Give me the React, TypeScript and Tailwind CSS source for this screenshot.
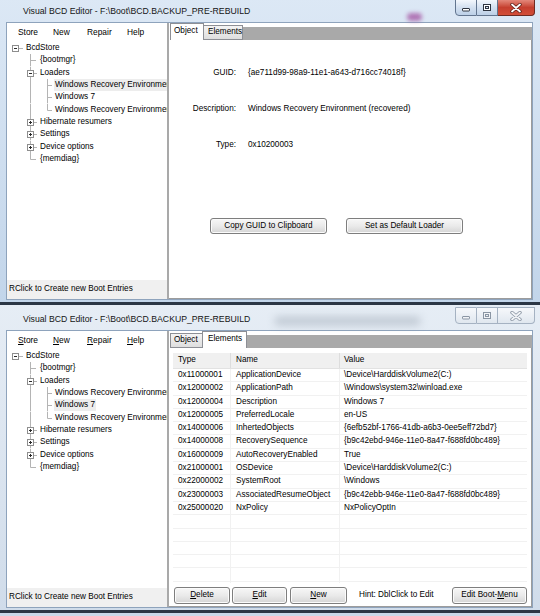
import React from "react";

type TreeItem = { text: string; level: 0 | 1 | 2; box?: "minus" | "plus" };

const TREE: TreeItem[] = [
  { text: "BcdStore", level: 0, box: "minus" },
  { text: "{bootmgr}", level: 1 },
  { text: "Loaders", level: 1, box: "minus" },
  { text: "Windows Recovery Environment", level: 2 },
  { text: "Windows 7", level: 2 },
  { text: "Windows Recovery Environment", level: 2 },
  { text: "Hibernate resumers", level: 1, box: "plus" },
  { text: "Settings", level: 1, box: "plus" },
  { text: "Device options", level: 1, box: "plus" },
  { text: "{memdiag}", level: 1 },
];

const ELEMENTS: [string, string, string][] = [
  ["0x11000001", "ApplicationDevice", "\\Device\\HarddiskVolume2(C:)"],
  ["0x12000002", "ApplicationPath", "\\Windows\\system32\\winload.exe"],
  ["0x12000004", "Description", "Windows 7"],
  ["0x12000005", "PreferredLocale", "en-US"],
  ["0x14000006", "InhertedObjects", "{6efb52bf-1766-41db-a6b3-0ee5eff72bd7}"],
  ["0x14000008", "RecoverySequence", "{b9c42ebd-946e-11e0-8a47-f688fd0bc489}"],
  ["0x16000009", "AutoRecoveryEnabled", "True"],
  ["0x21000001", "OSDevice", "\\Device\\HarddiskVolume2(C:)"],
  ["0x22000002", "SystemRoot", "\\Windows"],
  ["0x23000003", "AssociatedResumeObject", "{b9c42ebb-946e-11e0-8a47-f688fd0bc489}"],
  ["0x25000020", "NxPolicy", "NxPolicyOptIn"],
];

const TEXT_X = [18, 32, 47];
const X0 = 8.5;
const X1 = 23.5;
const X2 = 40.5;
const ROW_H = 12.33;

function Box({ cx, plus }: { cx: number; plus?: boolean }) {
  const m = 6.5;
  return (
    <g>
      <rect x={cx - 3} y={m - 3} width={6} height={6} fill="white" stroke="#8e8e8e" />
      <line x1={cx - 1.5} x2={cx + 1.5} y1={m} y2={m} stroke="#2a2a2a" />
      {plus && <line x1={cx} x2={cx} y1={m - 1.5} y2={m + 1.5} stroke="#2a2a2a" />}
    </g>
  );
}

function TreeRow({ item, index, selected }: { item: TreeItem; index: number; selected: boolean }) {
  const m = 6.5;
  const w = TEXT_X[item.level];
  return (
    <div className="flex h-[12.33px] items-center">
      <svg width={w} height={ROW_H} className="shrink-0" stroke="#b4b4b4" strokeWidth={1}>
        {index >= 1 && <line x1={X1} x2={X1} y1={0} y2={index === 9 ? m : ROW_H} />}
        {index >= 3 && index <= 5 && <line x1={X2} x2={X2} y1={0} y2={index === 5 ? m : ROW_H} />}
        {item.level === 0 && <line x1={11.5} x2={16} y1={m} y2={m} />}
        {item.level === 1 && !item.box && <line x1={X1} x2={29} y1={m} y2={m} />}
        {item.level === 1 && item.box && <line x1={X1 + 3} x2={30} y1={m} y2={m} />}
        {item.level === 2 && <line x1={X2} x2={45} y1={m} y2={m} />}
        {item.level === 0 && <Box cx={X0} />}
        {item.level === 1 && item.box && <Box cx={X1} plus={item.box === "plus"} />}
      </svg>
      <span className={`whitespace-nowrap leading-[12px] px-[1px] ${selected ? "bg-[#ededed]" : ""}`}>
        {item.text}
      </span>
    </div>
  );
}

function Btn({ className, children }: { className: string; children: React.ReactNode }) {
  return (
    <div
      className={`flex items-center justify-center rounded-[3px] border border-[#7e7e7e] bg-[#e6e6e6] bg-linear-to-b from-[#f7f7f7] via-[#eaeaea] to-[#d5d5d5] shadow-[inset_0_0_0_1px_#fbfbfb] whitespace-nowrap ${className}`}
    >
      {children}
    </div>
  );
}

function Controls({ active }: { active: boolean }) {
  const side = active
    ? "bg-[#d3e0f0] bg-linear-to-b from-[#f3f7fc] via-[#d3e0f0] to-[#bcd0e7] border-[#62758f]"
    : "bg-[#e9eef4] bg-linear-to-b from-[#f6f8fb] to-[#e0e7ef] border-[#a5b2c2]";
  const close = active
    ? "bg-[#c8463a] bg-linear-to-b from-[#e3877a] via-[#c53f2f] to-[#d24e38] border-[#6e2b22]"
    : "bg-[#e9eef4] bg-linear-to-b from-[#f6f8fb] to-[#e0e7ef] border-[#a5b2c2]";
  const ink = active ? "#2d3440" : "#8a95a3";
  const fill = active ? "#ffffff" : "#f2f4f7";
  return (
    <div className="absolute right-[5px] top-[2px] flex h-[17px]">
      <div className={`w-[22px] flex items-center justify-center rounded-bl-[4px] border ${side}`}>
        <svg width="10" height="8">
          <rect x="1.5" y="4.5" width="7" height="2.5" rx="0.5" fill={fill} stroke={ink} />
        </svg>
      </div>
      <div className={`w-[21px] flex items-center justify-center border-y border-r ${side}`}>
        <svg width="10" height="9">
          <rect x="1.5" y="1.5" width="7" height="6" fill="none" stroke={ink} />
          <rect x="2.5" y="2.5" width="5" height="4" fill="none" stroke={fill} />
          <rect x="3.5" y="3.5" width="3" height="2" fill="none" stroke={ink} />
        </svg>
      </div>
      <div className={`w-[37px] flex items-center justify-center rounded-br-[4px] border-y border-r ${close}`}>
        <svg width="12" height="10">
          <path d="M2 1.5 L10 8.5 M10 1.5 L2 8.5" stroke={active ? "#5a1f18" : ink} strokeWidth="3.4" strokeLinecap="round" />
          <path d="M2 1.5 L10 8.5 M10 1.5 L2 8.5" stroke={fill} strokeWidth="1.8" strokeLinecap="round" />
        </svg>
      </div>
    </div>
  );
}

function LeftPanel({ selected, underline }: { selected: number; underline: boolean }) {
  const u = (s: string) =>
    underline ? (
      <>
        <u className="underline-offset-1">{s[0]}</u>
        {s.slice(1)}
      </>
    ) : (
      s
    );
  return (
    <div className="w-[160px] flex flex-col bg-white overflow-hidden">
      <div className="h-[19px] shrink-0 flex items-center text-[8.4px]">
        <span className="ml-[11px] w-[35px]">{u("Store")}</span>
        <span className="w-[34px]">{u("New")}</span>
        <span className="w-[40px]">{u("Repair")}</span>
        <span>{u("Help")}</span>
      </div>
      <div className="flex-1 min-h-0 overflow-hidden">
        {TREE.map((item, i) => (
          <TreeRow key={i} item={item} index={i} selected={i === selected} />
        ))}
      </div>
      <div className="h-[19px] shrink-0 flex items-center pl-[2px] bg-[#f0f0f0] whitespace-nowrap">
        RClick to Create new Boot Entries
      </div>
    </div>
  );
}

function ObjectBody() {
  const rows = [
    ["GUID:", "{ae711d99-98a9-11e1-a643-d716cc74018f}"],
    ["Description:", "Windows Recovery Environment (recovered)"],
    ["Type:", "0x10200003"],
  ];
  return (
    <div className="flex flex-col">
      <div className="pt-[27px] flex flex-col gap-[24.3px]">
        {rows.map(([l, v]) => (
          <div key={l} className="flex h-[12px] items-center whitespace-nowrap">
            <span className="w-[67px] text-right">{l}</span>
            <span className="ml-[12px]">{v}</span>
          </div>
        ))}
      </div>
      <div className="flex mt-[66.7px] ml-[41px] gap-[19px]">
        <Btn className="w-[117px] h-[16px]">Copy GUID to Clipboard</Btn>
        <Btn className="w-[117px] h-[16px]">Set as Default Loader</Btn>
      </div>
    </div>
  );
}

function ElementsBody() {
  const empty = Array.from({ length: 7 });
  return (
    <div className="flex-1 min-h-0 flex flex-col">
      <div className="flex-1 min-h-0 mx-[4px] mt-[5px] overflow-hidden bg-white">
        <div className="flex h-[16px] bg-[#f0f0f0] border-b border-[#e2e2e2]">
          <div className="w-[58px] pl-[5px] flex items-center border-r border-[#dddddd]">Type</div>
          <div className="w-[109px] pl-[5px] flex items-center border-r border-[#dddddd]">Name</div>
          <div className="flex-1 pl-[4px] flex items-center">Value</div>
        </div>
        {ELEMENTS.map(([t, n, v]) => (
          <div key={t} className="flex h-[13.3px] border-b border-[#f1f1f1] whitespace-nowrap">
            <div className="w-[58px] pl-[5px] flex items-center border-r border-[#f1f1f1]">{t}</div>
            <div className="w-[109px] pl-[5px] flex items-center border-r border-[#f1f1f1]">{n}</div>
            <div className="flex-1 pl-[4px] flex items-center">{v}</div>
          </div>
        ))}
        {empty.map((_, i) => (
          <div key={i} className="flex h-[13.3px] border-b border-[#f1f1f1]">
            <div className="w-[58px] border-r border-[#f1f1f1]" />
            <div className="w-[109px] border-r border-[#f1f1f1]" />
            <div className="flex-1" />
          </div>
        ))}
      </div>
      <div className="flex items-center h-[17px] shrink-0 mt-[4px] mb-[2px] ml-[5px] mr-[4px]">
        <Btn className="w-[56px] h-[17px]">
          <u className="underline-offset-1">D</u>elete
        </Btn>
        <Btn className="w-[55px] h-[17px] ml-[2px]">
          <u className="underline-offset-1">E</u>dit
        </Btn>
        <Btn className="w-[57px] h-[17px] ml-[3px]">
          <u className="underline-offset-1">N</u>ew
        </Btn>
        <span className="ml-[12px] whitespace-nowrap">Hint: DblClick to Edit</span>
        <Btn className="w-[75px] h-[17px] ml-auto">
          Edit Boot-<u className="underline-offset-1">M</u>enu
        </Btn>
      </div>
    </div>
  );
}

function RightPanel({ tab }: { tab: "object" | "elements" }) {
  const sel = "h-[17px] border border-b-0 border-[#8d8f95] bg-white flex items-center";
  const unsel =
    "h-[15px] border border-[#8d8f95] bg-[#e8e8e8] bg-linear-to-b from-[#f4f4f4] to-[#dedede] flex items-center";
  return (
    <div className="flex-1 min-h-0 flex flex-col">
      <div className="h-[17px] shrink-0 flex items-end bg-white">
        {tab === "object" ? (
          <>
            <div className={`ml-[1px] w-[34px] pl-[3px] pb-[1px] ${sel}`}>Object</div>
            <div className={`w-[39px] pl-[4px] border-l-0 ${unsel}`}>Elements</div>
          </>
        ) : (
          <>
            <div className={`ml-[1px] w-[32px] pl-[3px] border-r-0 ${unsel}`}>Object</div>
            <div className={`w-[45px] pl-[5px] pb-[1px] ${sel}`}>Elements</div>
          </>
        )}
        <div className="flex-1 h-[13px] bg-[#a9a9a9]" />
      </div>
      <div className="flex-1 min-h-0 flex flex-col bg-white border-r border-b border-[#9c9c9c]">
        {tab === "object" ? <ObjectBody /> : <ElementsBody />}
      </div>
    </div>
  );
}

function Window({ active, tab, selected }: { active: boolean; tab: "object" | "elements"; selected: number }) {
  return (
    <div
      className={`relative h-[308px] flex flex-col ${
        active
          ? "bg-[#cfdff0] bg-linear-to-b from-[#dce8f5] to-[#c2d5ea]"
          : "bg-[#dbe4ef] bg-linear-to-b from-[#e6edf5] to-[#d0dcea]"
      }`}
    >
      <div className="h-[26px] shrink-0 flex items-center pl-[23px] pt-[3px] text-[8.7px] text-[#141414] whitespace-nowrap">
        Visual BCD Editor - F:\Boot\BCD.BACKUP_PRE-REBUILD
      </div>
      {active ? (
        <div className="absolute left-[407px] top-[16px] w-[15px] h-[8px] rounded-full bg-[#a65aa6] blur-[2px] opacity-80" />
      ) : (
        <div className="absolute left-[275px] top-[12px] w-[145px] h-[8px] bg-[#7f8b99] blur-[4px] opacity-40" />
      )}
      <Controls active={active} />
      <div className="flex h-[276px] shrink-0 ml-[7px] mr-[8px] shadow-[0_0_0_1px_#8ea3bc]">
        <LeftPanel selected={selected} underline={!active} />
        <div className="w-[2px] bg-[#a9a9a9]" />
        <RightPanel tab={tab} />
      </div>
      <div className="h-[3px] shrink-0" />
      <div className="h-[3px] shrink-0 bg-[#2b3645]" />
    </div>
  );
}

export default function App() {
  return (
    <div className="w-[540px] h-[616px] overflow-hidden bg-[#c9d8e9] font-['Liberation_Sans',Arial,sans-serif] text-[8.2px] text-black">
      <div className="-mt-[3px]">
        <Window active tab="object" selected={3} />
        <Window active={false} tab="elements" selected={4} />
      </div>
    </div>
  );
}
